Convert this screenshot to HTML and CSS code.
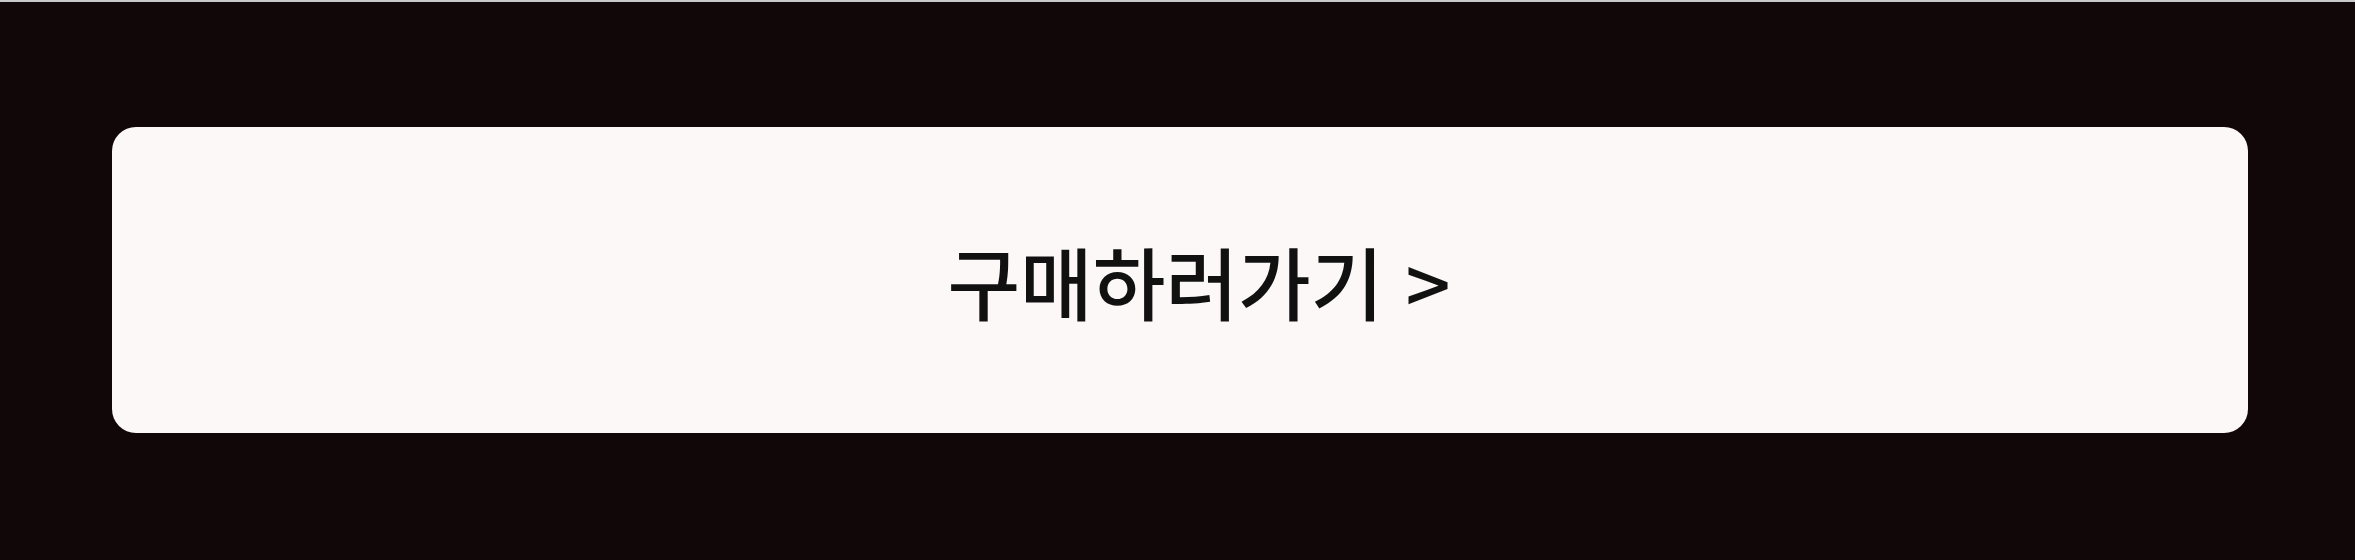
FILE: index.html
```html
<!DOCTYPE html>
<html lang="ko">
<head>
<meta charset="utf-8">
<title>구매하러가기</title>
<link rel="stylesheet" href="styles.css">
</head>
<body>
<main class="page">
  <a class="buy-button" href="#">구매하러가기 &gt;</a>
</main>
</body>
</html>
```
FILE: styles.css
```css
html, body {
  margin: 0;
  padding: 0;
}

body {
  background: #110709;
  border-top: 2px solid #c9c9cb;
  height: 558px;
  overflow: hidden;
  font-family: "Noto Sans CJK KR", "Noto Sans", sans-serif;
}

.page {
  padding: 125px 0 0 112px;
}

.buy-button {
  display: flex;
  align-items: center;
  justify-content: center;
  width: 2136px;
  height: 306px;
  box-sizing: border-box;
  padding-left: 38px;
  background: #fcf8f7;
  border-radius: 24px;
  color: #111;
  font-size: 79px;
  font-weight: 500;
  text-decoration: none;
  letter-spacing: 0;
}
```
